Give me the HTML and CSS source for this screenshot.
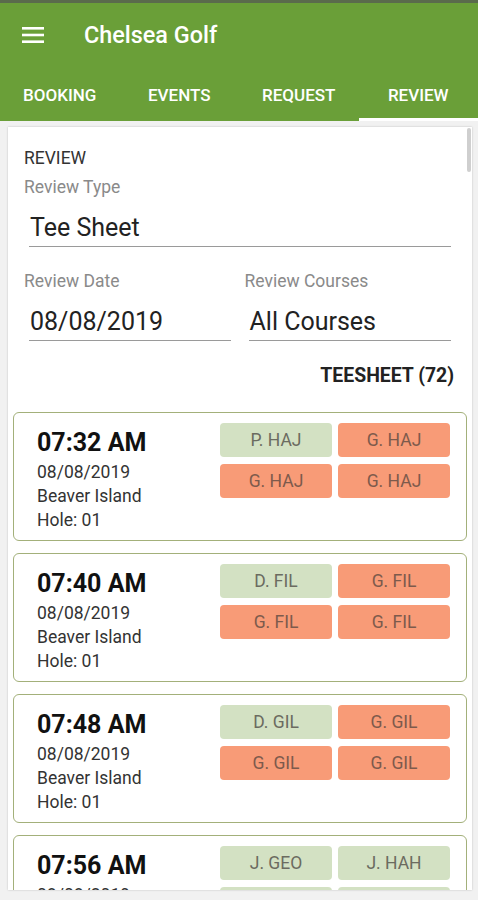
FILE: index.html
```html
<!DOCTYPE html>
<html lang="en">

<head>
    <meta charset="UTF-8">
    <meta name="viewport" content="width=device-width, initial-scale=1.0">
    <title>Chelsea Golf</title>
    <link rel="stylesheet" href="styles.css">
</head>

<body>
    <header class="appbar">
        <div class="toolbar">
            <svg class="menu" width="22" height="16" viewBox="0 0 22 16">
                <rect x="0" y="0" width="22" height="2.6" fill="#fff"/>
                <rect x="0" y="6.7" width="22" height="2.6" fill="#fff"/>
                <rect x="0" y="13.4" width="22" height="2.6" fill="#fff"/>
            </svg>
            <h1>Chelsea Golf</h1>
        </div>
        <nav class="tabs">
            <div class="tab">BOOKING</div>
            <div class="tab">EVENTS</div>
            <div class="tab">REQUEST</div>
            <div class="tab active">REVIEW</div>
        </nav>
    </header>

    <main class="panel">
        <div class="scrollbar"></div>
        <div class="form">
            <div class="section">REVIEW</div>
            <div class="field">
                <label>Review Type</label>
                <div class="input">Tee Sheet</div>
            </div>
            <div class="row">
                <div class="field">
                    <label>Review Date</label>
                    <div class="input">08/08/2019</div>
                </div>
                <div class="field">
                    <label>Review Courses</label>
                    <div class="input">All Courses</div>
                </div>
            </div>
            <div class="count">TEESHEET (72)</div>
        </div>

        <div class="list">
            <div class="card">
                <div class="info">
                    <div class="time">07:32 AM</div>
                    <div>08/08/2019</div>
                    <div>Beaver Island</div>
                    <div>Hole: 01</div>
                </div>
                <div class="players">
                    <div class="chip member">P. HAJ</div>
                    <div class="chip guest">G. HAJ</div>
                    <div class="chip guest">G. HAJ</div>
                    <div class="chip guest">G. HAJ</div>
                </div>
            </div>
            <div class="card">
                <div class="info">
                    <div class="time">07:40 AM</div>
                    <div>08/08/2019</div>
                    <div>Beaver Island</div>
                    <div>Hole: 01</div>
                </div>
                <div class="players">
                    <div class="chip member">D. FIL</div>
                    <div class="chip guest">G. FIL</div>
                    <div class="chip guest">G. FIL</div>
                    <div class="chip guest">G. FIL</div>
                </div>
            </div>
            <div class="card">
                <div class="info">
                    <div class="time">07:48 AM</div>
                    <div>08/08/2019</div>
                    <div>Beaver Island</div>
                    <div>Hole: 01</div>
                </div>
                <div class="players">
                    <div class="chip member">D. GIL</div>
                    <div class="chip guest">G. GIL</div>
                    <div class="chip guest">G. GIL</div>
                    <div class="chip guest">G. GIL</div>
                </div>
            </div>
            <div class="card">
                <div class="info">
                    <div class="time">07:56 AM</div>
                    <div>08/08/2019</div>
                </div>
                <div class="players">
                    <div class="chip member">J. GEO</div>
                    <div class="chip member">J. HAH</div>
                    <div class="chip member"></div>
                    <div class="chip member"></div>
                </div>
            </div>
        </div>
    </main>
</body>

</html>
```

FILE: styles.css
```css
* {
    margin: 0;
    padding: 0;
    box-sizing: border-box;
}

body {
    background-color: #f1f1f1;
    font-family: Roboto, "Liberation Sans", sans-serif;
    width: 478px;
    height: 900px;
    overflow: hidden;
}

.appbar {
    background-color: #6a9f38;
    border-top: 3px solid #5a6b4c;
    color: #fff;
}

.toolbar {
    height: 65px;
    display: flex;
    align-items: center;
    padding-left: 22px;
    padding-bottom: 1px;
}

.menu {
    display: block;
}

.toolbar h1 {
    font-size: 23.4px;
    font-weight: 500;
    margin-left: 40px;
}

.tabs {
    display: flex;
    height: 53px;
}

.tab {
    flex: 1;
    display: flex;
    align-items: center;
    justify-content: center;
    font-size: 17px;
    font-weight: 500;
    padding-top: 4px;
    border-bottom: 3px solid transparent;
}

.tab.active {
    border-bottom-color: #fff;
}

.panel {
    position: relative;
    margin: 6px 6px 0 8px;
    height: 763px;
    background-color: #fff;
    box-shadow: 0 0 2px rgba(0, 0, 0, 0.2);
    overflow: hidden;
}

.scrollbar {
    position: absolute;
    right: 1px;
    top: 1px;
    width: 4px;
    height: 44px;
    background-color: #cfcfcf;
    border-radius: 2px;
}

.form {
    padding: 20px 21px 0 16px;
}

.section {
    font-size: 17.5px;
    color: #333;
    line-height: 22px;
}

.field label {
    display: block;
    font-size: 17.5px;
    color: #8a8a8a;
    line-height: 22px;
    margin-top: 7px;
}

.field .input {
    margin-left: 5px;
    font-size: 25px;
    color: #222;
    line-height: 30px;
    padding: 15px 0 3px 1px;
    border-bottom: 1px solid #9a9a9a;
}

.row {
    display: flex;
    gap: 14px;
    margin-top: 16px;
}

.row .field {
    flex: 1;
}

.row .field:last-child .input {
    margin-left: 4px;
}

.count {
    text-align: right;
    font-size: 19.4px;
    font-weight: 700;
    color: #222;
    margin-top: 23px;
    margin-right: -3px;
    line-height: 24px;
}

.list {
    padding: 24px 5px 0 5px;
    display: flex;
    flex-direction: column;
    gap: 12px;
}

.card {
    height: 129px;
    border: 1px solid #a3b07a;
    border-radius: 6px;
    display: flex;
    justify-content: space-between;
    padding: 15px 16px 0 23px;
}

.info {
    font-size: 17.5px;
    color: #333;
    line-height: 24px;
}

.time {
    font-size: 25px;
    font-weight: 700;
    color: #111;
    line-height: 30px;
    margin-bottom: 2px;
}

.players {
    display: grid;
    grid-template-columns: 112px 112px;
    grid-auto-rows: 34px;
    gap: 7px 6px;
    margin-top: -5px;
}

.chip {
    border-radius: 4px;
    display: flex;
    align-items: center;
    justify-content: center;
    font-size: 17.5px;
    color: #6b6b60;
}

.chip.member {
    background-color: #d3e1c3;
}

.chip.guest {
    background-color: #f89b77;
    color: #7d5a4c;
}
```
